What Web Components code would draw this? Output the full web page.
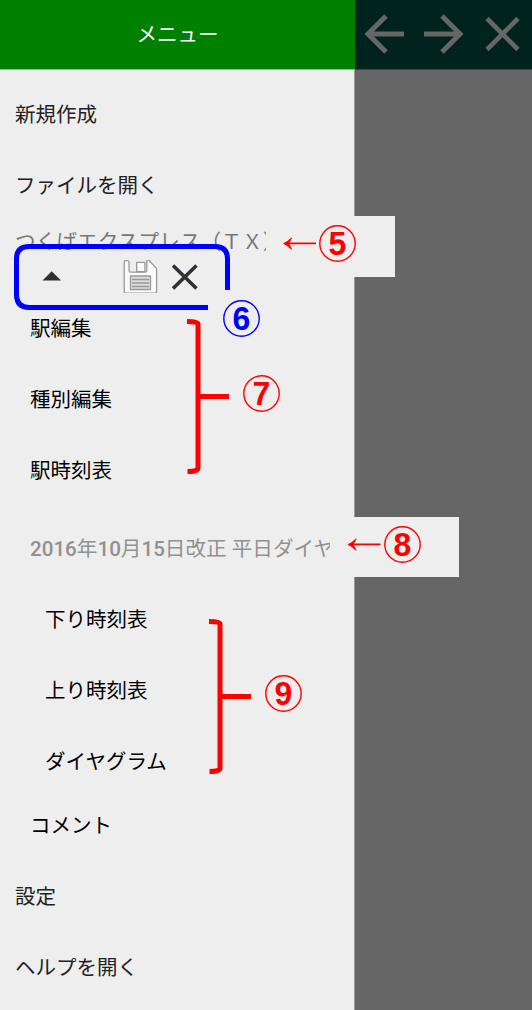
<!DOCTYPE html>
<html lang="ja">
<head>
<meta charset="utf-8">
<title>メニュー</title>
<style>
html,body{margin:0;height:100%;overflow:hidden}
body{background:#666;font-family:Roboto,"Noto Sans CJK JP",sans-serif;font-size:20.5px}
</style>
</head>
<body>
<menu-screen></menu-screen>
<script>
function define(name, html) {
  const t = document.createElement('template');
  t.innerHTML = html;
  customElements.define(name, class extends HTMLElement {
    constructor() {
      super();
      this.attachShadow({mode: 'open'}).append(t.content.cloneNode(true));
    }
  });
}

define('menu-item', `<style>
:host{display:flex;align-items:center;box-sizing:border-box;height:71px;padding-left:15px;color:#222;white-space:nowrap;line-height:30px}
:host([level="1"]){padding-left:30px;color:#000}
:host([level="2"]){padding-left:45px;color:#000}
</style><slot></slot>`);

define('menu-caption', `<style>
:host{display:block;box-sizing:border-box;overflow:hidden;white-space:nowrap;font-size:20.6px}
:host([kind="file"]){height:30px;width:251px;margin-left:15px;line-height:42px;color:#777;letter-spacing:.1px}
:host([kind="dia"]){height:71px;width:300px;margin-left:30px;margin-top:7px;line-height:72px;color:#919191}
::slotted(b){font-weight:500}
</style><slot></slot>`);

define('file-tools', `<style>
:host{display:block;height:42px}
svg{display:block}
</style>
<svg width="230" height="42" viewBox="0 251 230 42">
<path d="M42.500 280.500L51.700 271.300L61 280.500Z" fill="#303030"/>
<g fill="#fafafa" stroke="#999" stroke-width="1.300" stroke-linejoin="round">
<path d="M125.700 260.700H127.500Q129 260.700 129 262.200V270.700Q129 272.200 130.500 272.200H145.300Q146.800 272.200 146.800 270.700V260.700H149.300L156.600 268.600V291.500Q156.600 293.200 154.800 293.200H126Q124.200 293.200 124.200 291.500V262.200Q124.200 260.700 125.700 260.700Z"/>
<path d="M136.700 262.300H144.900V271.700H136.700Z"/>
<path d="M130.500 276H150.500V289.500H130.500Z" fill="#ddd"/>
<path d="M132 279.500H149M132 283H149M132 286.500H149" stroke-width="1.300"/>
</g>
<path d="M173 265.500L196.500 288.500M196.500 265.500L173 288.500" stroke="#303030" stroke-width="3.600"/>
</svg>`);
define('side-menu', `<style>
:host{display:flex;flex-direction:column;box-sizing:border-box;width:355px;height:1010px;background:#eee;border-right:1px solid #999}
header{height:69px;flex:none;width:355px;background:#008000;border-bottom:1px solid #9ab49a;color:#fff;display:flex;align-items:center;justify-content:center;line-height:30px}
nav{display:flex;flex-direction:column;padding-top:9px}
</style>
<header>メニュー</header>
<nav>
<menu-item>新規作成</menu-item>
<menu-item>ファイルを開く</menu-item>
<menu-caption kind="file">つくばエクスプレス（ＴＸ）</menu-caption>
<file-tools></file-tools>
<menu-item level="1">駅編集</menu-item>
<menu-item level="1">種別編集</menu-item>
<menu-item level="1">駅時刻表</menu-item>
<menu-caption kind="dia"><b>2016</b>年<b>10</b>月<b>15</b>日改正 平日ダイヤ</menu-caption>
<menu-item level="2">下り時刻表</menu-item>
<menu-item level="2">上り時刻表</menu-item>
<menu-item level="2">ダイヤグラム</menu-item>
<menu-item level="1" style="margin-top:-7px">コメント</menu-item>
<menu-item>設定</menu-item>
<menu-item>ヘルプを開く</menu-item>
</nav>`);

define('top-bar', `<style>
:host{display:block;height:69px;background:#00231d;border-bottom:1px solid #354844}
svg{display:block}
</style>
<svg width="177" height="69" viewBox="355 0 177 69" fill="none" stroke="#666" stroke-width="5">
<path d="M404 34H368M386 16L368 34L386 52"/>
<path d="M424 34H460M442 16L460 34L442 52"/>
<path d="M487 18.500L518 49.500M518 18.500L487 49.500" stroke-width="4.600"/>
</svg>`);

define('callout-number', `<style>
:host{position:absolute;width:37px;height:37px;display:flex;align-items:center;justify-content:center;font:700 34px/37px "Liberation Sans",sans-serif;color:#f00}
svg{position:absolute;inset:0}
span{transform:scaleX(.94)}
</style><svg width="37" height="37"><circle cx="18.500" cy="18.500" r="17.700" fill="none" stroke="currentColor" stroke-width="1.400"/></svg><span><slot></slot></span>`);

define('callout-layer', `<style>
:host{position:absolute;inset:0}
svg{position:absolute;left:0;top:0}
</style>
<svg width="532" height="1010" fill="none" stroke="#f00">
<path d="M354 216H395V277H354ZM354 517H459V577H354Z" fill="#eee" stroke="none"/>
<path d="M208 307.500H29Q16.500 307.500 16.500 294.500V259Q16.500 246.500 29 246.500H215Q227.500 246.500 227.500 259V290" stroke="#00f" stroke-width="5"/>
<g stroke-width="5">
<path d="M187 321.500Q198 321.500 198 324V468Q198 471.500 187.500 471.500M198 396.500H229"/>
<path d="M209 621.500Q220 621.500 220 624V768Q220 771.500 209.500 771.500M220 696.500H251"/>
</g>
<g stroke="none" fill="#f00">
<path id="arrow" d="M283 243.500Q288 241 291.500 237.500L292 238.300Q290.500 241 289.500 242.500H316V244.300H289.500Q290.500 246.500 292 249L291.500 249.800Q288 246 283 243.500Z"/>
<use href="#arrow" x="64.500" y="301"/>
</g>
</svg>
<callout-number style="left:319px;top:225px">5</callout-number>
<callout-number style="left:223px;top:300px;color:#00f">6</callout-number>
<callout-number style="left:243px;top:375px">7</callout-number>
<callout-number style="left:384px;top:526px">8</callout-number>
<callout-number style="left:265px;top:675px">9</callout-number>`);

define('menu-screen', `<style>
:host{position:relative;display:grid;grid-template-columns:355px 1fr;width:532px;height:1010px;overflow:hidden;background:#666}
</style>
<side-menu></side-menu><top-bar></top-bar><callout-layer></callout-layer>`);
</script>
</body>
</html>
